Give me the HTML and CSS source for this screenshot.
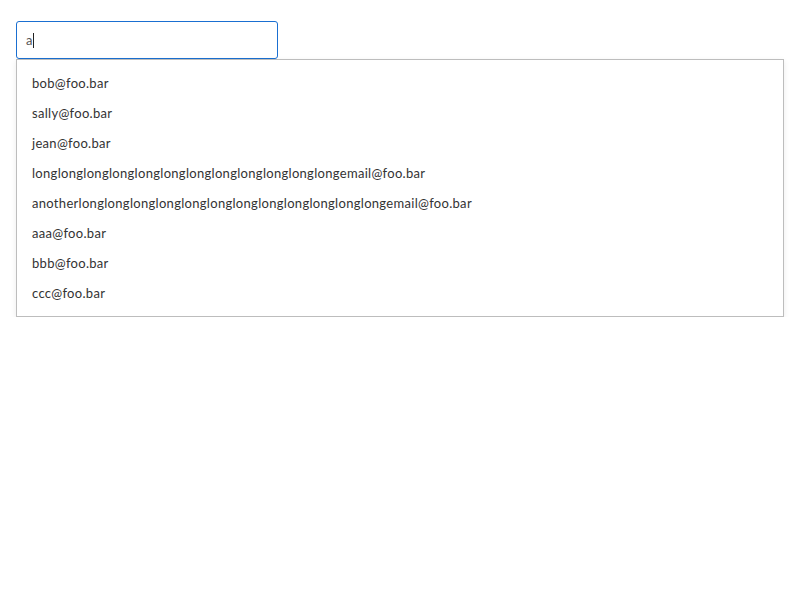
FILE: index.html
```html
<!DOCTYPE html>
<html>
<head>
<meta charset="utf-8">
<link rel="stylesheet" href="styles.css">
</head>
<body>
<div class="combo">
  <div class="field"><span class="value">a</span><span class="caret"></span></div>
  <ul class="menu">
    <li>bob@foo.bar</li>
    <li>sally@foo.bar</li>
    <li>jean@foo.bar</li>
    <li>longlonglonglonglonglonglonglonglonglonglonglongemail@foo.bar</li>
    <li>anotherlonglonglonglonglonglonglonglonglonglonglonglongemail@foo.bar</li>
    <li>aaa@foo.bar</li>
    <li>bbb@foo.bar</li>
    <li>ccc@foo.bar</li>
  </ul>
</div>
</body>
</html>
```
FILE: styles.css
```css
html, body { margin: 0; padding: 0; background: #fff; }
body { font-family: Lato, "Open Sans", sans-serif; color: #333; font-size: 13px; }
.combo { padding: 21px 16px 0 16px; display: flex; flex-direction: column; }
.field {
  width: 262px; height: 38px; box-sizing: border-box;
  border: 1px solid #1a6fd1; border-radius: 3px;
  display: flex; align-items: center; padding-left: 9px;
  font-size: 13px; color: #555;
}
.caret { width: 1px; height: 15px; background: #222; margin-left: 1px; }
.menu {
  list-style: none; margin: 0; padding: 8px 0;
  border: 1px solid #bdbdbd; background: #fff;
  box-shadow: 0 2px 6px rgba(0,0,0,0.08);
}
.menu li { height: 30px; line-height: 30px; padding-left: 15px; letter-spacing: 0.3px; }
```
